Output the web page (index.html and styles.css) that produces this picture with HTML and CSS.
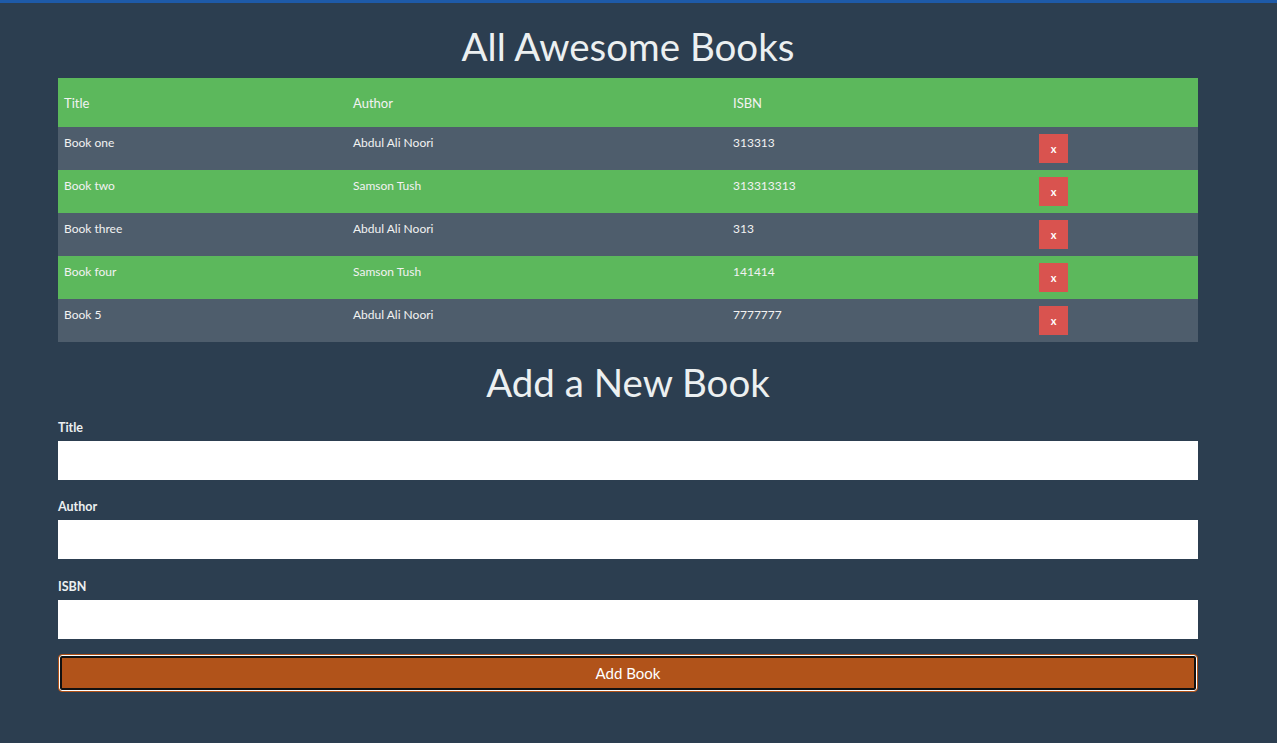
FILE: index.html
```html
<!DOCTYPE html>
<html lang="en">
<head>
<meta charset="utf-8">
<title>Awesome Books</title>
<link rel="stylesheet" href="styles.css">
</head>
<body>
<div class="topbar"></div>
<main class="page">
  <h1 class="heading">All Awesome Books</h1>
  <table class="books">
    <thead>
      <tr class="head-row">
        <th class="col-title">Title</th>
        <th class="col-author">Author</th>
        <th class="col-isbn">ISBN</th>
        <th class="col-action"></th>
      </tr>
    </thead>
    <tbody>
      <tr class="row-grey"><td>Book one</td><td>Abdul Ali Noori</td><td>313313</td><td class="action"><button class="remove">x</button></td></tr>
      <tr class="row-green"><td>Book two</td><td>Samson Tush</td><td>313313313</td><td class="action"><button class="remove">x</button></td></tr>
      <tr class="row-grey"><td>Book three</td><td>Abdul Ali Noori</td><td>313</td><td class="action"><button class="remove">x</button></td></tr>
      <tr class="row-green"><td>Book four</td><td>Samson Tush</td><td>141414</td><td class="action"><button class="remove">x</button></td></tr>
      <tr class="row-grey"><td>Book 5</td><td>Abdul Ali Noori</td><td>7777777</td><td class="action"><button class="remove">x</button></td></tr>
    </tbody>
  </table>

  <h2 class="heading heading-form">Add a New Book</h2>
  <form class="book-form">
    <label class="field-label field-first" for="title">Title</label>
    <input class="field-input" id="title" type="text">
    <label class="field-label" for="author">Author</label>
    <input class="field-input" id="author" type="text">
    <label class="field-label field-last" for="isbn">ISBN</label>
    <input class="field-input" id="isbn" type="text">
    <button class="add-btn" type="button">Add Book</button>
  </form>
</main>
</body>
</html>
```
FILE: styles.css
```css
* { box-sizing: border-box; }

html, body {
  margin: 0;
  padding: 0;
  background: #2c3e50;
  font-family: Lato, "Open Sans", "Liberation Sans", sans-serif;
  color: #ecf0f1;
}

.topbar {
  height: 3px;
  background: #1e5aa8;
}

.page {
  width: 1140px;
  margin-left: 58px;
  display: flex;
  flex-direction: column;
}

.heading {
  margin: 19px 0 8px;
  font-size: 38.5px;
  font-weight: 400;
  line-height: 48px;
  text-align: center;
  color: #ecf0f1;
}

.heading-form {
  margin: 16px 0 0;
}

.books {
  width: 1140px;
  border-collapse: collapse;
  table-layout: fixed;
}

.col-title { width: 289px; }
.col-author { width: 380px; }
.col-isbn { width: 306px; }
.col-action { width: 165px; }

.head-row {
  background: #5cb85c;
  height: 49px;
}

.head-row th {
  text-align: left;
  font-weight: 400;
  font-size: 13px;
  padding: 0 6px;
  vertical-align: middle;
  color: #f2f2f2;
}

.books td {
  font-size: 12px;
  line-height: 13px;
  padding: 9px 6px 0;
  vertical-align: top;
  height: 43px;
  color: #f2f2f2;
}

.books td.action {
  padding: 7px 6px;
}

.row-grey { background: #4e5d6c; }
.row-green { background: #5cb85c; }

.remove {
  display: block;
  width: 29px;
  height: 29px;
  border: none;
  background: #d9534f;
  color: #ffffff;
  font-family: Lato, "Liberation Sans", sans-serif;
  font-size: 11px;
  font-weight: 700;
  padding: 0;
}

.book-form {
  display: flex;
  flex-direction: column;
  margin-top: 15px;
}

.field-label {
  font-size: 12.5px;
  font-weight: 700;
  line-height: 13px;
  height: 13px;
  margin: 20px 0 7px;
  color: #ecf0f1;
}

.field-first { margin-top: 0; }
.field-last { margin-top: 21px; }

.field-input {
  height: 39px;
  border: none;
  background: #ffffff;
  padding: 0 8px;
  font-family: Lato, sans-serif;
}

.add-btn {
  margin-top: 15px;
  height: 38px;
  background: #b1531a;
  border: 1px solid #b1531a;
  border-radius: 4px;
  box-shadow: inset 0 0 0 1px #ffffff, inset 0 0 0 3px #111111;
  color: #ffffff;
  font-family: Lato, "Liberation Sans", sans-serif;
  font-size: 15px;
}
```
